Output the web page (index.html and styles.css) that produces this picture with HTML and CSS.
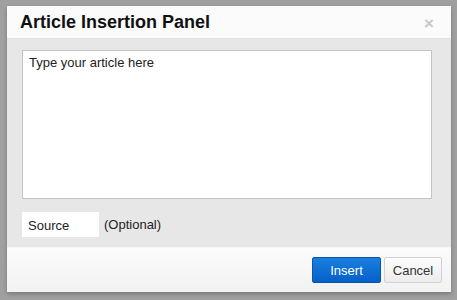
FILE: index.html
```html
<!DOCTYPE html>
<html>
<head>
<meta charset="utf-8">
<link rel="stylesheet" href="styles.css">
</head>
<body>
<div class="backdrop">
  <div class="modal">
    <div class="modal-header">
      <h3 class="title">Article Insertion Panel</h3>
      <span class="close">×</span>
    </div>
    <div class="modal-body">
      <div class="textarea">Type your article here</div>
      <div class="source-row">
        <div class="source-input">Source</div>
        <span class="optional">(Optional)</span>
      </div>
    </div>
    <div class="modal-footer">
      <button class="btn btn-primary">Insert</button>
      <button class="btn btn-default">Cancel</button>
    </div>
  </div>
</div>
</body>
</html>
```
FILE: styles.css
```css
html, body {
  margin: 0;
  padding: 0;
}
body {
  width: 457px;
  height: 300px;
  overflow: hidden;
  background: #a0a0a0;
  font-family: "Liberation Sans", Arial, sans-serif;
}
.backdrop {
  padding: 6px 6px 0 7px;
}
.modal {
  width: 444px;
  height: 286px;
  background: #fafafa;
  display: flex;
  flex-direction: column;
  box-shadow: 0 2px 4px rgba(0,0,0,0.25);
}
.modal-header {
  height: 33px;
  border-bottom: 1px solid #e2e2e2;
  display: flex;
  align-items: center;
  justify-content: space-between;
  padding: 0 17px 0 13px;
  box-sizing: border-box;
  background: #fbfbfb;
}
.title {
  margin: 0;
  font-size: 18px;
  font-weight: bold;
  color: #111;
  padding-top: 1px;
}
.close {
  font-size: 17px;
  font-weight: bold;
  color: #c8c8c8;
  padding-top: 4px;
}
.modal-body {
  height: 208px;
  background: #e7e7e7;
  padding: 11px 19px 0 15px;
  box-sizing: border-box;
}
.textarea {
  height: 149px;
  background: #fff;
  border: 1px solid #c4c4c4;
  box-sizing: border-box;
  padding: 4px 6px;
  font-size: 13px;
  color: #222;
}
.source-row {
  margin-top: 13px;
  display: flex;
  align-items: center;
}
.source-input {
  width: 77px;
  height: 25px;
  box-sizing: border-box;
  background: #fff;
  padding: 6px 6px 0 6px;
  font-size: 13px;
  color: #222;
}
.optional {
  margin-left: 5px;
  font-size: 13px;
  color: #222;
}
.modal-footer {
  flex: 1;
  background: linear-gradient(#fbfbfb, #f2f2f2);
  display: flex;
  justify-content: flex-end;
  align-items: center;
  padding: 0 9px 0 0;
  gap: 3px;
  border-top: 1px solid #f5f5f5;
}
.btn {
  font-family: "Liberation Sans", Arial, sans-serif;
  font-size: 13px;
  height: 26px;
  border-radius: 2px;
  padding: 0;
  margin: 0;
}
.btn-primary {
  width: 69px;
  color: #fff;
  background: linear-gradient(#1a7fe0, #0560c8);
  border: 1px solid #0a55a8;
}
.btn-default {
  width: 58px;
  color: #333;
  background: linear-gradient(#fdfdfd, #ececec);
  border: 1px solid #d2d2d2;
}
```
